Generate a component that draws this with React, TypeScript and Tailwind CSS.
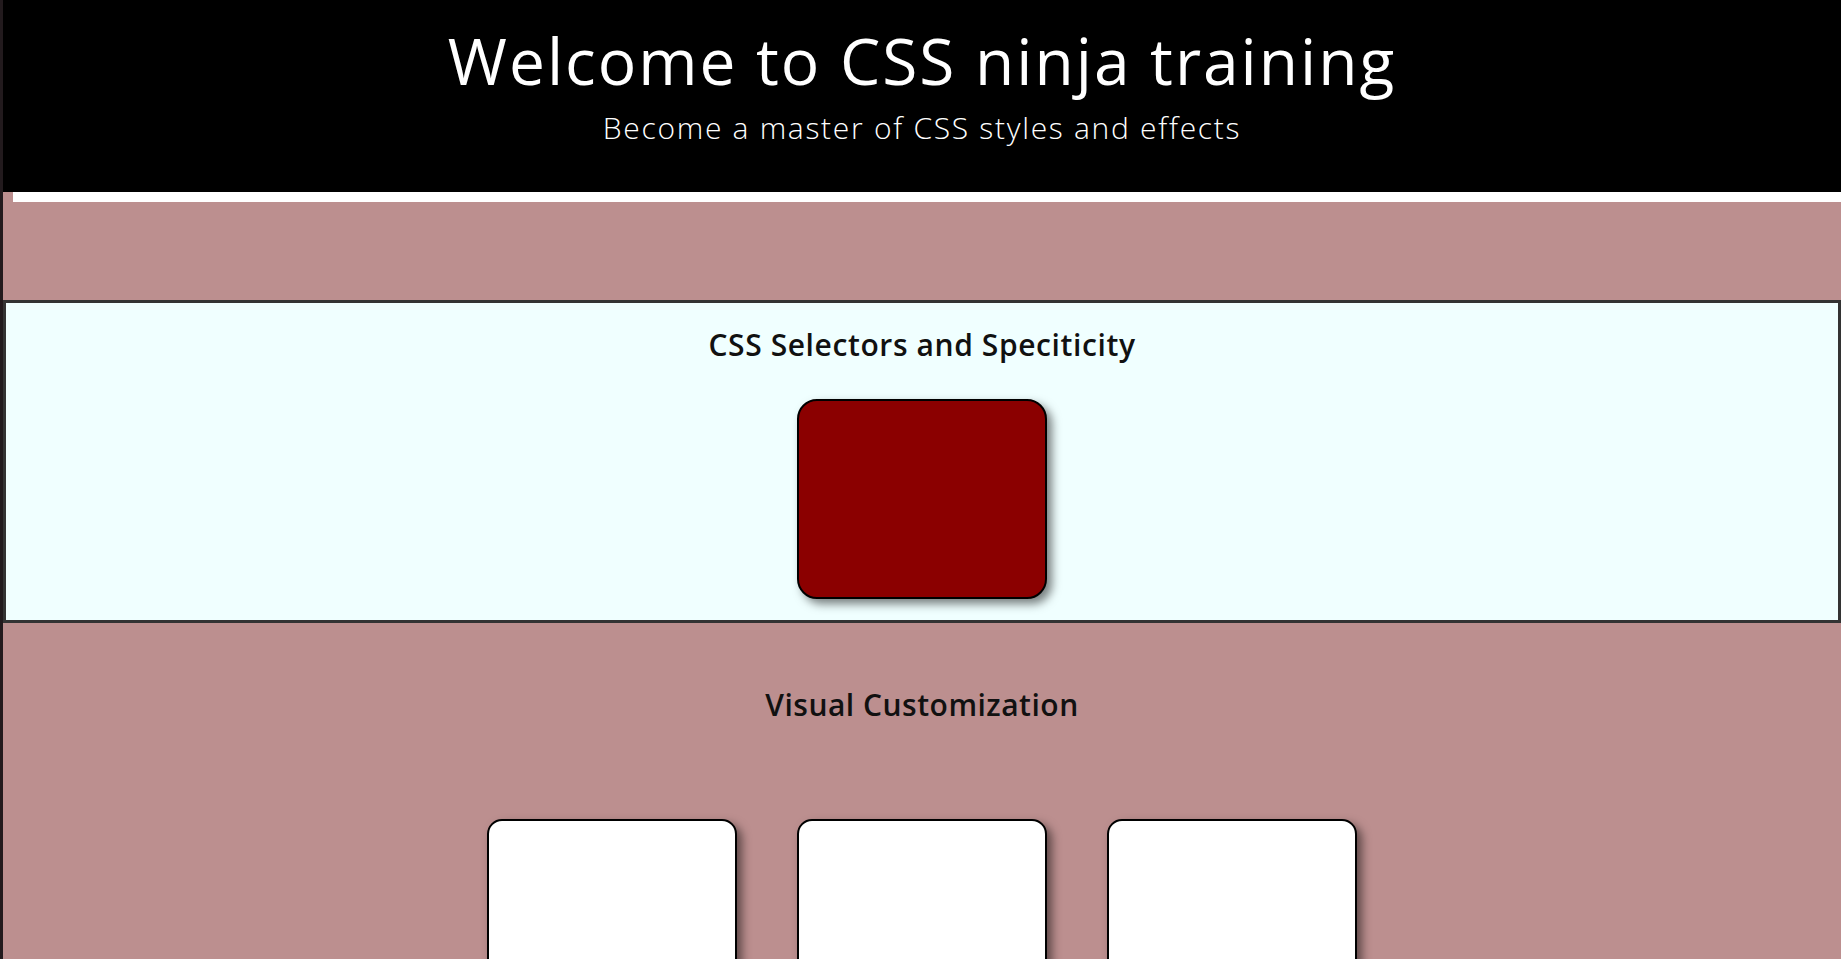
export default function App() {
    const cards = [0, 1, 2];

    return (
        <div className="flex min-h-screen bg-[#bc8f8f] font-['Open_Sans',sans-serif] text-black">
            <div className="w-[3px] shrink-0 bg-[#221a1d]" />
            <main className="flex-1 flex flex-col">
                <header className="h-[192px] bg-black text-white text-center pt-[21px]">
                    <h1 className="text-[64px] leading-[80px] font-normal tracking-[2px]">Welcome to CSS ninja training</h1>
                    <p className="mt-[7px] text-[30px] leading-[40px] font-light tracking-[1.7px]">Become a master of CSS styles and effects</p>
                </header>

                <div className="h-[108px]">
                    <div className="h-[10px] ml-[10px] bg-white" />
                </div>

                <section className="border-[3px] border-[#333] bg-[#f0ffff] pt-[22px] pb-[21px] flex flex-col items-center">
                    <h2 className="text-[30px] leading-[40px] font-semibold tracking-[0.6px] text-[#111]">CSS Selectors and Speciticity</h2>
                    <div className="mt-[34px] w-[250px] h-[200px] rounded-[20px] border-2 border-black bg-[#8b0000] shadow-[5px_5px_10px_rgba(0,0,0,0.5)]" />
                </section>

                <section className="pt-[62px] pb-10 flex flex-col items-center">
                    <h2 className="text-[30px] leading-[40px] font-semibold tracking-[0.5px] text-[#111]">Visual Customization</h2>
                    <div className="mt-[94px] flex gap-[60px]">
                        {cards.map(card => (
                            <div
                                key={card}
                                className="w-[250px] h-[200px] rounded-[15px] border-2 border-black bg-white shadow-[5px_5px_10px_rgba(0,0,0,0.5)]"
                            />
                        ))}
                    </div>
                </section>
            </main>
        </div>
    );
}
